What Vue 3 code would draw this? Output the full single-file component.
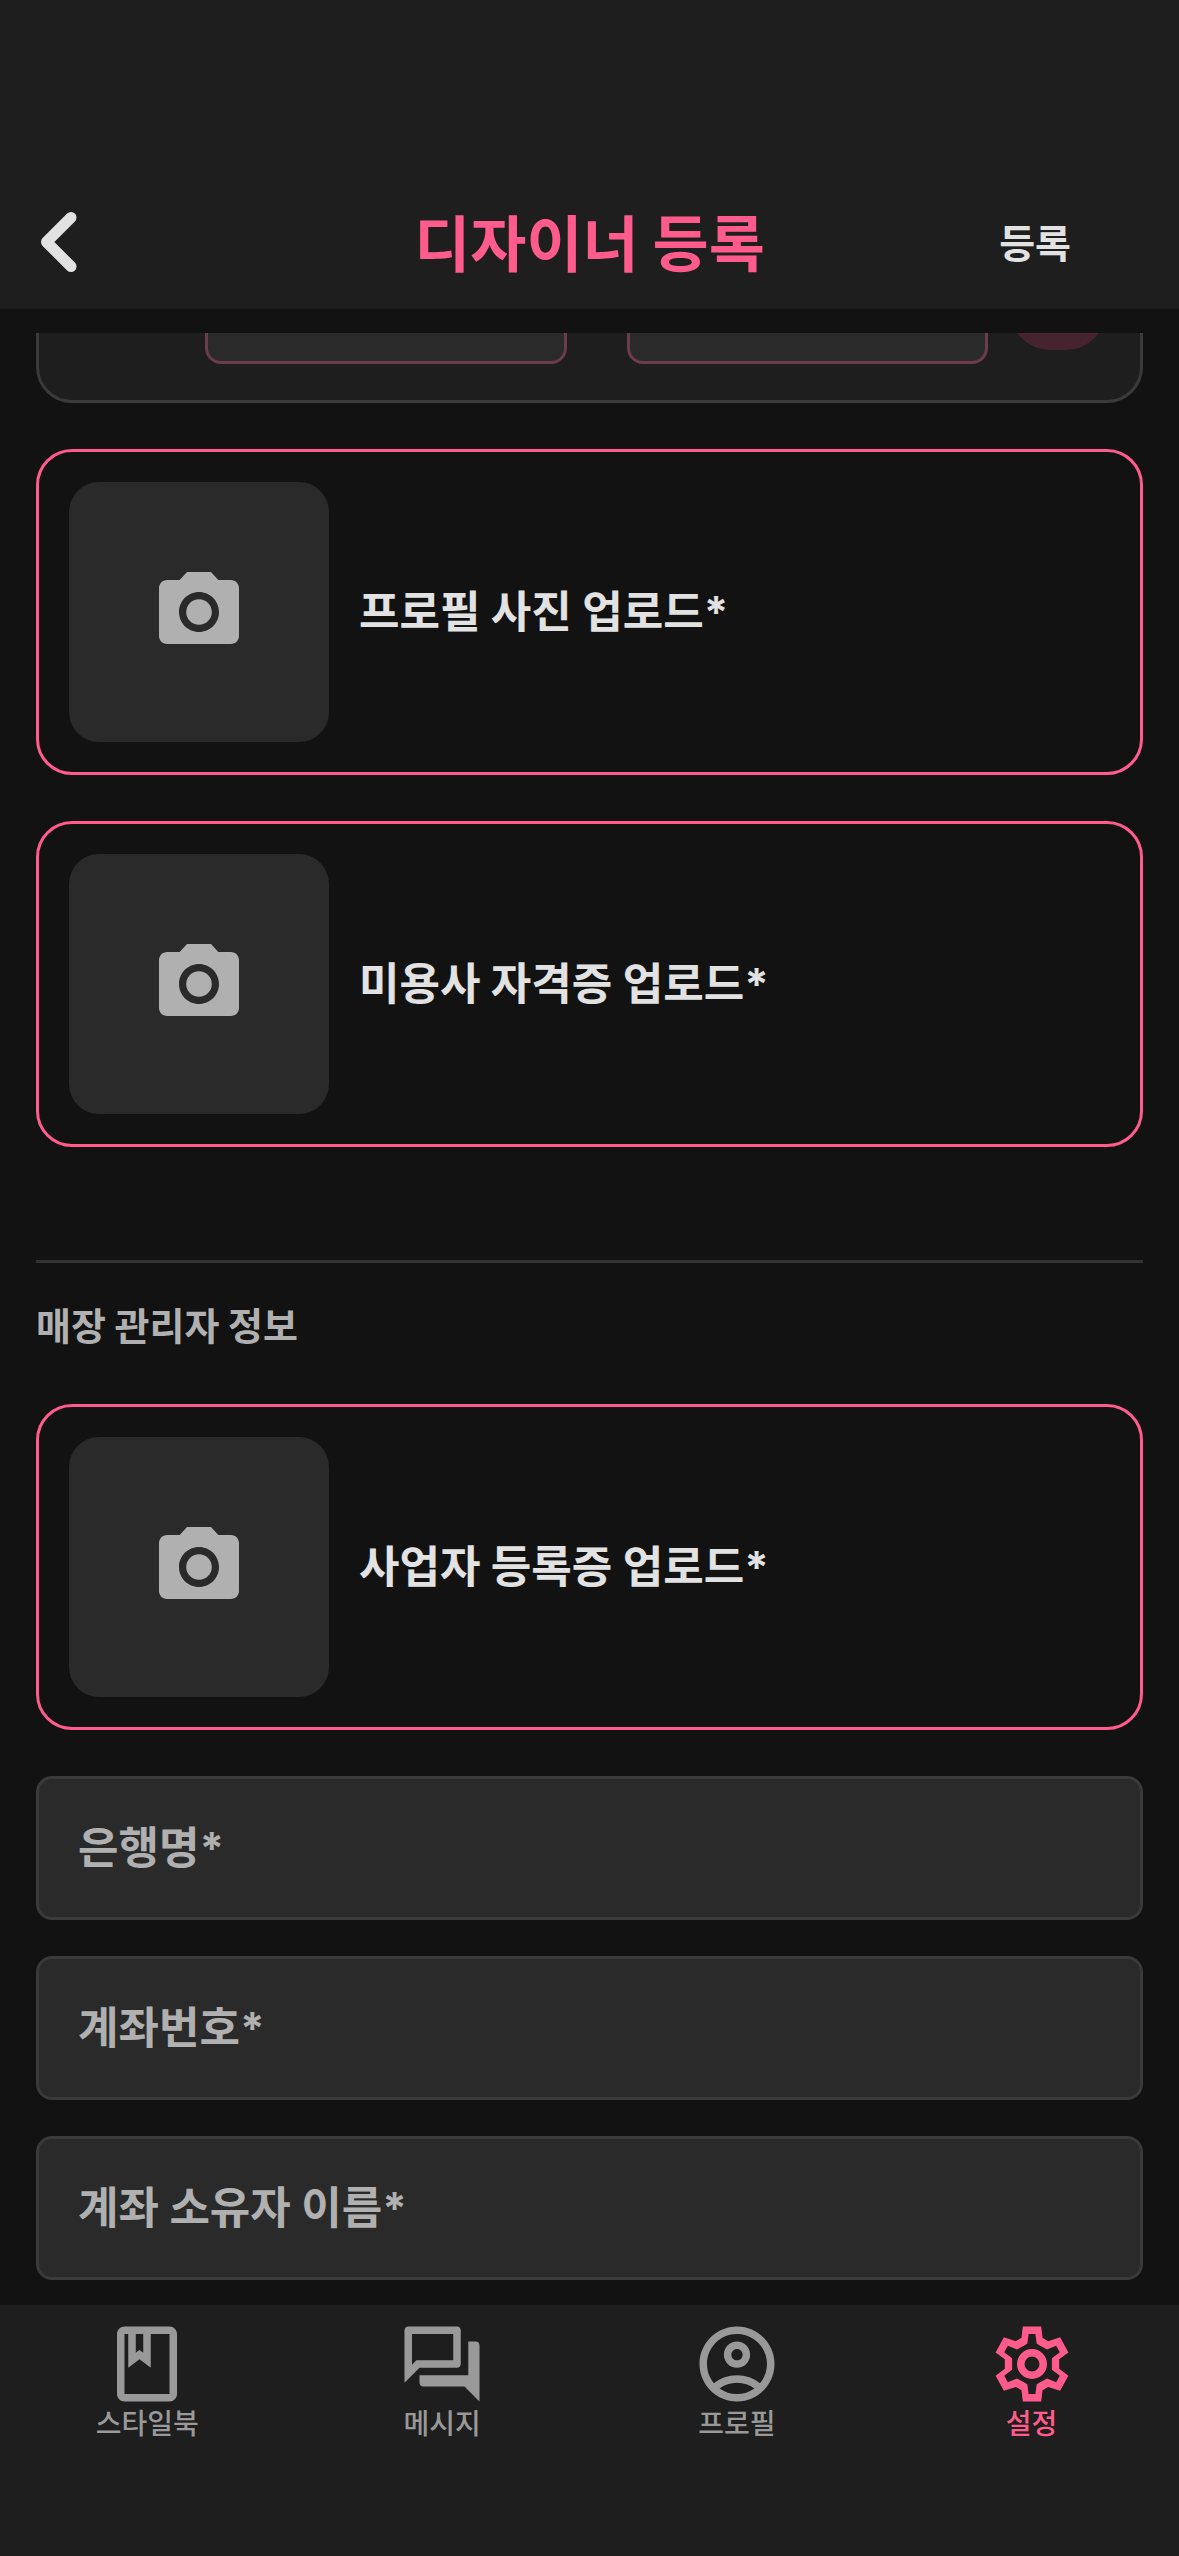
<template>
  <div class="page">
    <header class="header">
      <button type="button" class="back-btn" aria-label="뒤로">
        <svg viewBox="0 0 48 72" class="back-icon">
          <path d="M35 11.500L10.500 36l24.500 24.500" />
        </svg>
      </button>
      <h1 class="title">디자이너 등록</h1>
      <button type="button" class="submit-btn">등록</button>
    </header>

    <main class="content">
      <section class="schedule-clip">
        <div class="schedule-card">
          <input v-model="startTime" class="time-input" type="text" aria-label="시작" />
          <input v-model="endTime" class="time-input" type="text" aria-label="종료" />
          <button type="button" class="round-btn" aria-label="추가"></button>
        </div>
      </section>

      <label v-for="item in designerUploads" :key="item" class="upload">
        <input type="file" accept="image/*" class="file-input" />
        <span class="thumb">
          <svg viewBox="0 0 24 24" class="camera"><path :d="cameraPath" /></svg>
        </span>
        <span class="upload-text">{{ item }}</span>
      </label>

      <section class="manager">
        <h2 class="section-title">매장 관리자 정보</h2>
        <label class="upload">
          <input type="file" accept="image/*" class="file-input" />
          <span class="thumb">
            <svg viewBox="0 0 24 24" class="camera"><path :d="cameraPath" /></svg>
          </span>
          <span class="upload-text">사업자 등록증 업로드*</span>
        </label>
        <div class="fields">
          <input
            v-for="field in fields"
            :key="field.key"
            v-model="form[field.key]"
            class="field"
            type="text"
            :placeholder="field.label"
            :aria-label="field.label"
          />
        </div>
      </section>
    </main>

    <nav class="tabbar">
      <a v-for="tab in tabs" :key="tab.label" href="#" class="tab" :class="{ active: tab.active }">
        <svg viewBox="0 0 24 24" class="tab-icon"><path :d="tab.icon" fill-rule="evenodd" /></svg>
        <span>{{ tab.label }}</span>
      </a>
    </nav>
  </div>
</template>

<script setup>
import { ref, reactive } from 'vue'

const startTime = ref('')
const endTime = ref('')

const designerUploads = ['프로필 사진 업로드*', '미용사 자격증 업로드*']

const form = reactive({ bank: '', account: '', owner: '' })
const fields = [
  { key: 'bank', label: '은행명*' },
  { key: 'account', label: '계좌번호*' },
  { key: 'owner', label: '계좌 소유자 이름*' }
]

const cameraPath =
  'M12 8.800a3.200 3.200 0 1 0 0 6.400 3.200 3.200 0 1 0 0-6.400zM9 2L7.170 4H4c-1.100 0-2 .9-2 2v12c0 1.100.9 2 2 2h16c1.100 0 2-.9 2-2V6c0-1.100-.9-2-2-2h-3.170L15 2H9zm3 15c-2.760 0-5-2.240-5-5s2.240-5 5-5 5 2.240 5 5-2.240 5-5 5z'

const tabs = [
  {
    label: '스타일북',
    icon: 'M18 2H6c-1.100 0-2 .9-2 2v16c0 1.100.9 2 2 2h12c1.100 0 2-.9 2-2V4c0-1.100-.9-2-2-2zM9 4h2v5l-1-.75L9 9V4zm9 16H6V4h1v9l3-2.250L13 13V4h5v16z'
  },
  {
    label: '메시지',
    icon: 'M15 4v7H5.170L4 12.170V4h11m1-2H3c-.55 0-1 .45-1 1v14l4-4h10c.55 0 1-.45 1-1V3c0-.55-.45-1-1-1zm5 4h-2v9H6v2c0 .55.45 1 1 1h11l4 4V7c0-.55-.45-1-1-1z'
  },
  {
    label: '프로필',
    icon: 'M12 2C6.480 2 2 6.480 2 12s4.480 10 10 10 10-4.480 10-10S17.520 2 12 2zM7.350 18.500C8.660 17.560 10.260 17 12 17s3.340.56 4.650 1.500C15.340 19.440 13.740 20 12 20s-3.340-.56-4.650-1.500zm10.790-1.380C16.450 15.800 14.320 15 12 15s-4.450.8-6.140 2.120C4.700 15.730 4 13.950 4 12c0-4.420 3.580-8 8-8s8 3.580 8 8c0 1.950-.7 3.730-1.860 5.120zM12 6c-1.930 0-3.500 1.570-3.500 3.500S10.070 13 12 13s3.500-1.570 3.500-3.500S13.930 6 12 6zm0 5c-.83 0-1.500-.67-1.500-1.500S11.170 8 12 8s1.500.67 1.500 1.500S12.830 11 12 11z'
  },
  {
    label: '설정',
    active: true,
    icon: 'M9.550 2h4.900l.35 3 1.500.9 3.200-1.050 2.200 4.050-2.450 1.850v2.500l2.450 1.850-2.200 4.050-3.200-1.050-1.500.9-.35 3h-4.900l-.35-3-1.500-.9-3.200 1.050-2.200-4.050 2.450-1.850v-2.500L2.300 8.900l2.200-4.050 3.200 1.050 1.500-.9zM11.100 4l-.35 2.600-2.750 1.550-2.450-1-.95 1.700 2.100 1.600v3.100l-2.100 1.600.95 1.700 2.450-1 2.750 1.550.35 2.600h1.800l.35-2.600 2.750-1.550 2.450 1 .95-1.700-2.100-1.600v-3.100l2.100-1.600-.95-1.700-2.450 1-2.750-1.550L12.900 4zM12 8a4 4 0 1 0 0 8 4 4 0 1 0 0-8zm0 2a2 2 0 1 1 0 4 2 2 0 1 1 0-4z'
  }
]
</script>

<style>
body {
  margin: 0;
  background: #121212;
}
</style>

<style scoped>
.page {
  display: flex;
  flex-direction: column;
  min-height: 100vh;
  background: #121212;
  color: #e2e2e2;
  font-family: "Noto Sans CJK KR", "Noto Sans", sans-serif;
  font-weight: 700;
}

.page * {
  box-sizing: border-box;
}

button,
input {
  font: inherit;
  color: inherit;
}

button {
  border: 0;
  padding: 0;
  background: transparent;
  cursor: pointer;
}

/* header */
.header {
  display: grid;
  grid-template-columns: 1fr auto 1fr;
  align-items: center;
  padding: 174px 36px 0;
  background: #1e1e1e;
}

.back-btn {
  justify-self: start;
  height: 135px;
}

.back-icon {
  display: block;
  width: 48px;
  height: 72px;
  fill: none;
  stroke: #e2e2e2;
  stroke-width: 11;
  stroke-linecap: round;
  stroke-linejoin: round;
}

.title {
  margin: 0;
  padding-bottom: 2px;
  color: #ff5c8d;
  font-size: 61px;
  font-weight: 700;
  line-height: 72px;
}

.submit-btn {
  justify-self: end;
  padding: 0 72px 2px;
  font-size: 39px;
  line-height: 48px;
}

/* form */
.content {
  flex: 1;
  display: flex;
  flex-direction: column;
  gap: 46px;
  padding: 24px 36px;
}

.schedule-clip {
  display: flex;
  flex-direction: column;
  justify-content: flex-end;
  height: 70px;
  overflow: hidden;
}

.schedule-card {
  display: flex;
  align-items: center;
  padding: 36px 34px 36px 166px;
  border: 3px solid #3a3a3a;
  border-radius: 36px;
  background: #1e1e1e;
}

.time-input {
  flex: 1;
  min-width: 0;
  height: 144px;
  padding: 0 39px;
  border: 3px solid #6c3c4c;
  border-radius: 16px;
  background: #2a2a2a;
}

.time-input + .time-input {
  margin-left: 60px;
}

.round-btn {
  width: 96px;
  height: 116px;
  margin-left: 22px;
  border-radius: 40px;
  background: #46242f;
}

.upload {
  display: flex;
  align-items: center;
  gap: 30px;
  padding: 30px;
  border: 3px solid #ff5c8d;
  border-radius: 36px;
  cursor: pointer;
}

.file-input {
  position: absolute;
  width: 1px;
  height: 1px;
  opacity: 0;
}

.thumb {
  display: flex;
  align-items: center;
  justify-content: center;
  width: 260px;
  height: 260px;
  border-radius: 30px;
  background: #2a2a2a;
}

.camera {
  width: 96px;
  height: 96px;
  fill: #b0b0b0;
}

.upload-text {
  font-family: Inter, "Noto Sans CJK KR", sans-serif;
  font-size: 44px;
  line-height: 60px;
}

.manager {
  margin-top: 67px;
  border-top: 3px solid #333;
}

.section-title {
  margin: 37px 0 56px;
  color: #b0b0b0;
  font-size: 38px;
  font-weight: 700;
  line-height: 48px;
}

.fields {
  display: flex;
  flex-direction: column;
  gap: 36px;
  margin-top: 46px;
}

.field {
  width: 100%;
  height: 144px;
  padding: 0 39px;
  border: 3px solid #3a3a3a;
  border-radius: 16px;
  background: #2a2a2a;
  font-family: Inter, "Noto Sans CJK KR", sans-serif;
  font-size: 44px;
}

.field::placeholder {
  color: #b0b0b0;
  opacity: 1;
}

/* bottom tabs */
.tabbar {
  display: flex;
  padding: 14px 0 120px;
  background: #1e1e1e;
}

.tab {
  flex: 1;
  display: flex;
  flex-direction: column;
  align-items: center;
  color: #999;
  font-size: 28px;
  font-weight: 500;
  line-height: 27px;
  text-decoration: none;
}

.tab.active {
  color: #ff5c8d;
}

.tab-icon {
  width: 90px;
  height: 90px;
  fill: currentColor;
}
</style>
